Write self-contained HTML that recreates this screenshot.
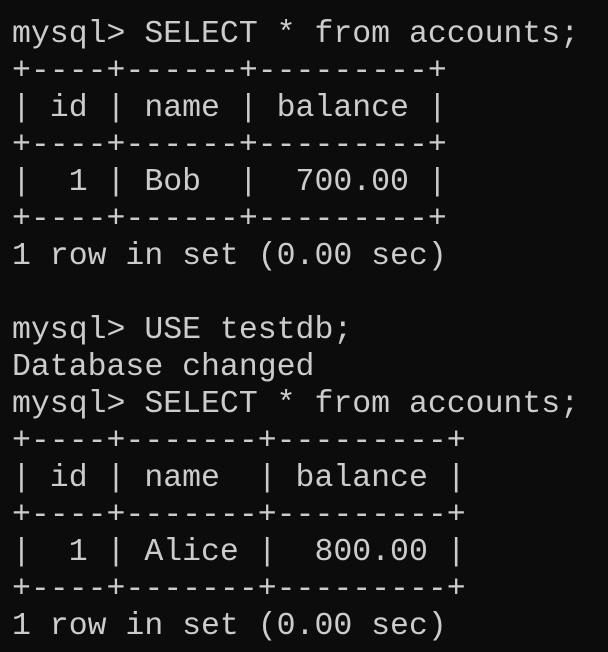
<!DOCTYPE html>
<html><head><meta charset="utf-8"><style>
html,body{margin:0;padding:0;background:#0c0c0c;width:608px;height:652px;overflow:hidden}
pre{margin:0;position:absolute;left:12px;top:16px;font-family:"Liberation Mono",monospace;font-size:31.5px;line-height:37px;color:#cccccc;white-space:pre}
</style></head><body><pre>mysql&gt; SELECT * from accounts;
+----+------+---------+
| id | name | balance |
+----+------+---------+
|  1 | Bob  |  700.00 |
+----+------+---------+
1 row in set (0.00 sec)

mysql&gt; USE testdb;
Database changed
mysql&gt; SELECT * from accounts;
+----+-------+---------+
| id | name  | balance |
+----+-------+---------+
|  1 | Alice |  800.00 |
+----+-------+---------+
1 row in set (0.00 sec)</pre></body></html>
